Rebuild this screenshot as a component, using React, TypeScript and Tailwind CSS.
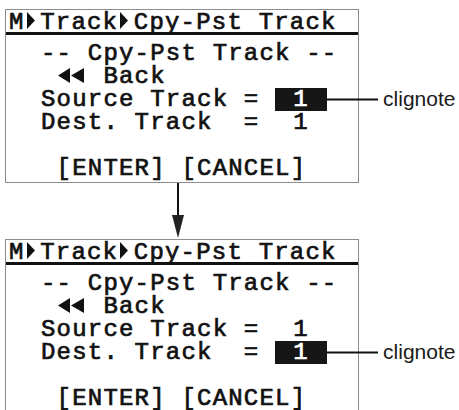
const mono =
  "font-['Liberation_Mono',monospace] text-[24px] tracking-[1.2px] text-[#111] [-webkit-text-stroke:0.7px_#111]";

function RightTri() {
  return (
    <svg viewBox="0 0 15.6 17" className="inline-block w-[15.6px] h-[17px] align-baseline">
      <polygon points="2,0 10,8.5 2,17" fill="#111" />
    </svg>
  );
}

function BackArrows() {
  return (
    <svg viewBox="0 0 31.2 15" className="inline-block w-[31.2px] h-[15px] align-baseline">
      <polygon points="1,7.5 13,0 13,15" fill="#111" />
      <polygon points="14,7.5 27,0 27,15" fill="#111" />
    </svg>
  );
}

function Value({ blink }: { blink: boolean }) {
  if (!blink) {
    return <span className="inline-block w-[52px] h-[23px] text-center">1</span>;
  }
  return (
    <span className="relative inline-block w-[52px] h-[23px] bg-[#161616] text-white text-center [-webkit-text-stroke:0.7px_white]">
      1
      <span className="absolute left-full top-1/2 -translate-y-1/2 flex items-center">
        <span className="block w-[51px] h-[2px] bg-[#111]" />
        <span className="ml-[5px] font-['Liberation_Sans',Arial,sans-serif] text-[21px] leading-none tracking-normal text-[#1a1a1a] [-webkit-text-stroke:0px] -mt-[4px]">
          clignote
        </span>
      </span>
    </span>
  );
}

function Screen({ blink }: { blink: "source" | "dest" }) {
  return (
    <div className={`w-[354px] h-[174px] shrink-0 border-[1.5px] border-[#8c8c8c] bg-white ${mono}`}>
      <div className="h-[25px] border-b-[3px] border-[#111] pl-[3px] pt-[2px] leading-[20px] whitespace-pre">
        M<RightTri />Track<RightTri />Cpy-Pst Track
      </div>
      <div className="mt-[7px] pl-[35px] leading-[23px] whitespace-pre">
        <div>-- Cpy-Pst Track --</div>
        <div>
          {" "}
          <BackArrows /> Back
        </div>
        <div>
          Source Track = <Value blink={blink === "source"} />
        </div>
        <div>
          Dest. Track  = <Value blink={blink === "dest"} />
        </div>
        <div> </div>
        <div> [ENTER] [CANCEL]</div>
      </div>
    </div>
  );
}

export default function App() {
  return (
    <div className="w-[459px] h-[410px] overflow-hidden bg-white pt-[9px] pl-[5px]">
      <Screen blink="source" />
      <div className="h-[56px] pl-[167px]">
        <svg viewBox="0 0 12 56" className="block w-[12px] h-[56px]">
          <line x1="6" y1="0" x2="6" y2="34" stroke="#111" strokeWidth="2" />
          <polygon points="0,32 12,32 6,55" fill="#222" />
        </svg>
      </div>
      <Screen blink="dest" />
    </div>
  );
}
